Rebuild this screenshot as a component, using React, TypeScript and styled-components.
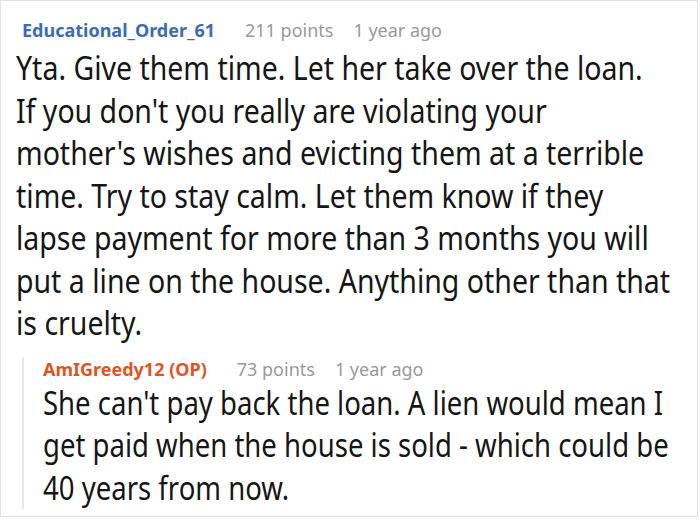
import React from "react";
import styled, { createGlobalStyle } from "styled-components";

const Global = createGlobalStyle`
  html, body { margin: 0; padding: 0; background: #fff; }
  body { font-family: "Noto Sans", "Open Sans", sans-serif; }
`;

const Frame = styled.div`
  width: 698px;
  height: 517px;
  box-sizing: border-box;
  border: 1px solid #e2e2e2;
  background: #fff;
  padding: 17px 10px 0 15px;
  overflow: hidden;
`;

const Meta = styled.div<{ $indent?: number; $pull?: number }>`
  display: flex;
  align-items: baseline;
  font-size: 18px;
  line-height: 24px;
  padding-left: ${(p) => p.$indent ?? 0}px;
  margin-top: ${(p) => -(p.$pull ?? 0)}px;
`;

const Author = styled.span<{ $op?: boolean }>`
  font-weight: 700;
  color: ${(p) => (p.$op ? "#e0541f" : "#3b6cb4")};
  margin-right: 30px;
`;

const Stat = styled.span`
  color: #999;
  margin-right: 20px;
`;

const Body = styled.p<{ $top?: number; $bottom?: number; $squeeze: number }>`
  margin: ${(p) => p.$top ?? 5}px 0 ${(p) => p.$bottom ?? 0}px;
  font-size: 33px;
  line-height: 42.5px;
  color: #161616;
  white-space: nowrap;
  transform: scaleX(${(p) => p.$squeeze});
  transform-origin: left top;
`;

const Reply = styled.div`
  margin: 21px 0 0 6px;
  border-left: 2px solid #e8e8e8;
  padding-left: 19px;
`;

export default function App() {
  return (
    <>
      <Global />
      <Frame>
        <Meta $indent={6}>
          <Author>Educational_Order_61</Author>
          <Stat>211 points</Stat>
          <Stat>1 year ago</Stat>
        </Meta>
        <Body $squeeze={0.863}>
          Yta. Give them time. Let her take over the loan.
          <br />
          If you don't you really are violating your
          <br />
          mother's wishes and evicting them at a terrible
          <br />
          time. Try to stay calm. Let them know if they
          <br />
          lapse payment for more than 3 months you will
          <br />
          put a line on the house. Anything other than that
          <br />
          is cruelty.
        </Body>
        <Reply>
          <Meta $pull={9}>
            <Author $op>AmIGreedy12 (OP)</Author>
            <Stat>73 points</Stat>
            <Stat>1 year ago</Stat>
          </Meta>
          <Body $squeeze={0.834} $top={1} $bottom={-8}>
            She can't pay back the loan. A lien would mean I
            <br />
            get paid when the house is sold - which could be
            <br />
            40 years from now.
          </Body>
        </Reply>
      </Frame>
    </>
  );
}
